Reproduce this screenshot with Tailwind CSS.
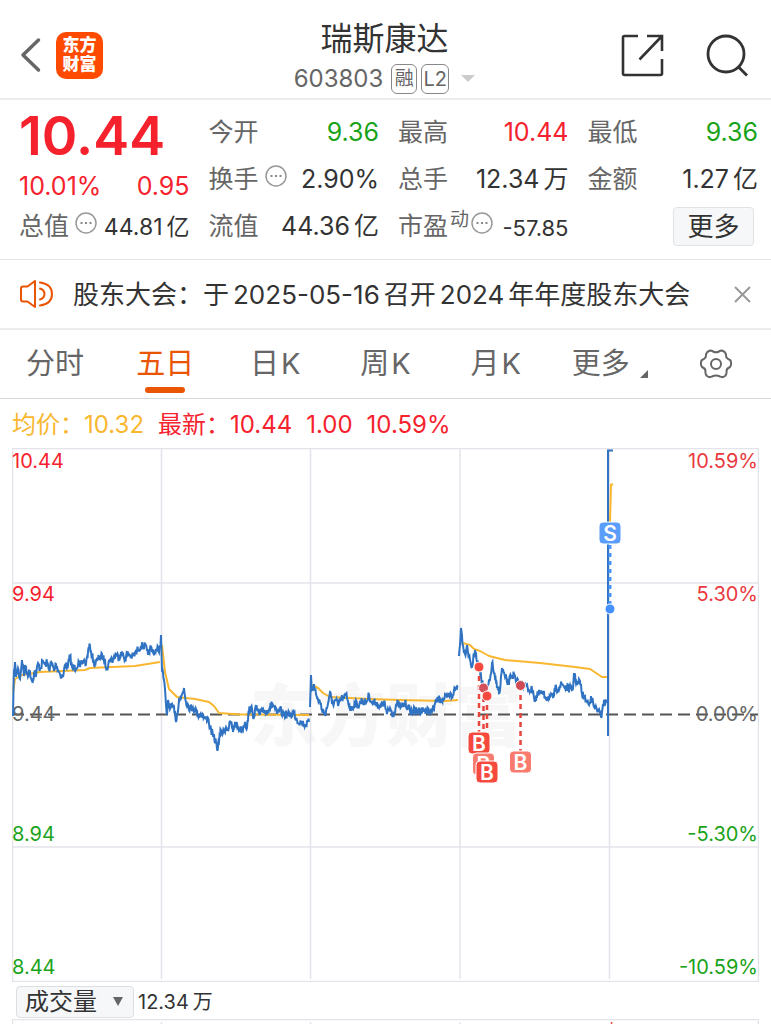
<!DOCTYPE html>
<html lang="zh-CN">
<head>
  <meta charset="UTF-8">
  <meta name="viewport" content="width=device-width, initial-scale=1.0">
  <title>瑞斯康达 603803</title>
  <script src="https://cdn.jsdelivr.net/npm/@tailwindcss/browser@4"></script>
</head>
<body class="bg-white font-['Inter','Noto_Sans_CJK_SC',sans-serif] text-[#333] overflow-x-hidden">
  <!-- Header -->
  <header class="grid grid-cols-[1fr_auto_1fr] items-center h-[100px] border-b-2 border-[#ececec] pl-5 pr-[22px]">
    <div class="flex items-center gap-3 pt-3">
      <button aria-label="返回">
        <svg class="w-6 h-9" viewBox="0 0 24 36" fill="none" stroke="#666" stroke-width="3.500" stroke-linecap="round" stroke-linejoin="round"><path d="M18.500 3 3 18 18.500 33"/></svg>
      </button>
      <a href="#" class="flex flex-col items-center justify-center size-[47px] rounded-[10px] bg-[#ff4a00] text-white text-[17px] leading-[19px] font-black">
        <span>东方</span><span>财富</span>
      </a>
    </div>
    <div class="text-center pt-4">
      <h1 class="text-[32px] leading-[44px]">瑞斯康达</h1>
      <button class="flex items-center gap-1 h-9 mx-auto text-[#666] text-[24px]">
        <span class="mr-1">603803</span>
        <span class="flex items-center justify-center w-[26px] h-[30px] border border-[#888] rounded-md text-[19px]">融</span>
        <span class="flex items-center justify-center w-7 h-[30px] border border-[#888] rounded-md text-[20px]">L2</span>
        <svg class="w-3.5 h-2 ml-2" viewBox="0 0 14 8"><path d="M0 0h14L7 7z" fill="#ccc"/></svg>
      </button>
    </div>
    <div class="flex items-center justify-end gap-[42px] pt-3">
      <button aria-label="分享">
        <svg class="w-[43px] h-[43px]" viewBox="0 0 43 43" fill="none" stroke="#333" stroke-width="2.600"><path d="M17 2H3.500Q2 2 2 3.500v36Q2 41 3.500 41h36q1.500 0 1.500-1.500V25M26 2h15v15M41 2 18.500 25.500"/></svg>
      </button>
      <button aria-label="搜索">
        <svg class="w-[43px] h-[43px]" viewBox="0 0 43 43" fill="none" stroke="#333" stroke-width="2.800"><circle cx="20" cy="20" r="18"/><path d="m32.500 33 8.500 8.500"/></svg>
      </button>
    </div>
  </header>

  <!-- Quote -->
  <section class="grid grid-cols-4 gap-x-[19px] pt-[9px] pb-[9px] pl-[19px] pr-[13px] border-b border-[#e4e4e4] text-[25px] whitespace-nowrap">
    <div class="text-[#f5222d]">
      <div class="h-[54px] text-[54px] leading-[54px] font-semibold">10.44</div>
      <div class="flex items-center justify-between h-12 text-[25px]"><span>10.01%</span><span>0.95</span></div>
      <div class="flex items-center justify-between h-8 text-[#333]">
        <span class="text-[25px] text-[#666]">总值</span>
        <svg class="w-[22px] h-[22px] mb-2" viewBox="0 0 22 22"><circle cx="11" cy="11" r="10" fill="none" stroke="#999" stroke-width="1.500"/><path d="M5.500 11h2m2.500 0h2m2.500 0h2" stroke="#888" stroke-width="2"/></svg>
        <span class="flex gap-1 text-[23px]"><span>44.81</span><span>亿</span></span>
      </div>
    </div>
    <div>
      <div class="flex items-center justify-between h-[47px]"><span class="text-[#666]">今开</span><span class="text-[#1aa31a]">9.36</span></div>
      <div class="flex items-center justify-between h-[47px]">
        <span class="flex items-center gap-1.5 text-[#666]">换手
          <svg class="w-[22px] h-[22px] mb-2" viewBox="0 0 22 22"><circle cx="11" cy="11" r="10" fill="none" stroke="#999" stroke-width="1.500"/><path d="M5.500 11h2m2.500 0h2m2.500 0h2" stroke="#888" stroke-width="2"/></svg>
        </span>
        <span>2.90%</span>
      </div>
      <div class="flex items-center justify-between h-[47px]"><span class="text-[#666]">流值</span><span class="flex gap-1"><span>44.36</span><span>亿</span></span></div>
    </div>
    <div>
      <div class="flex items-center justify-between h-[47px]"><span class="text-[#666]">最高</span><span class="text-[#f5222d]">10.44</span></div>
      <div class="flex items-center justify-between h-[47px]"><span class="text-[#666]">总手</span><span class="flex gap-1"><span>12.34</span><span>万</span></span></div>
      <div class="flex items-center justify-between h-[47px]">
        <span class="flex items-center text-[#666]">市盈<span class="ml-0.5 mb-3 text-[19px]">动</span>
          <svg class="w-[22px] h-[22px] mb-2 ml-0.5" viewBox="0 0 22 22"><circle cx="11" cy="11" r="10" fill="none" stroke="#999" stroke-width="1.500"/><path d="M5.500 11h2m2.500 0h2m2.500 0h2" stroke="#888" stroke-width="2"/></svg>
        </span>
        <span class="text-[22px] pt-1">-57.85</span>
      </div>
    </div>
    <div>
      <div class="flex items-center justify-between h-[47px]"><span class="text-[#666]">最低</span><span class="text-[#1aa31a]">9.36</span></div>
      <div class="flex items-center justify-between h-[47px]"><span class="text-[#666]">金额</span><span class="flex gap-1"><span>1.27</span><span>亿</span></span></div>
      <div class="flex items-center justify-end h-[47px] pr-1"><button class="w-[81px] h-[39px] rounded border border-[#e0e2e6] bg-[#f6f7f9] text-[26px] leading-none">更多</button></div>
    </div>
  </section>

  <!-- Notice -->
  <section class="flex items-center h-[70px] pl-5 pr-5 border-b-2 border-[#ececec]">
    <svg class="w-[34px] h-7 shrink-0" viewBox="0 0 34 28" fill="none" stroke="#ea5504" stroke-width="2" stroke-linejoin="round" stroke-linecap="round"><path d="M15 1v26L7.500 21.500H3Q1 21.500 1 19.500v-11Q1 6.500 3 6.500h4.500zM20 8.500q4.500 1.500 4.500 5.500T20 19.500M20 2.500q12 1.500 12 11.500T20 25.500"/></svg>
    <a href="#" class="flex-1 ml-[19px] text-[26px] whitespace-nowrap">股东大会：于<span class="mx-1">2025-05-16</span>召开<span class="mx-1">2024</span>年年度股东大会</a>
    <button aria-label="关闭"><svg class="size-[17px]" viewBox="0 0 17 17" stroke="#999" stroke-width="2"><path d="m1 1 15 15M16 1 1 16"/></svg></button>
  </section>

  <!-- Period tabs -->
  <nav class="grid grid-cols-7 h-[69px] border-b border-[#d8d8d8] text-[29px] text-[#666]">
    <button>分时</button>
    <button class="relative text-[#ea5504]">五日<span class="absolute bottom-[5px] left-1/2 -translate-x-1/2 w-10 h-1.5 rounded-full bg-[#ea5504]"></span></button>
    <button>日<span class="ml-0.5">K</span></button>
    <button>周<span class="ml-0.5">K</span></button>
    <button>月<span class="ml-0.5">K</span></button>
    <button class="flex items-center justify-center gap-2.5 pl-2">更多<svg class="w-2 h-2 mt-5" viewBox="0 0 8 8"><path d="M8 0v8H0z" fill="#666"/></svg></button>
    <button class="flex items-center justify-center" aria-label="设置">
      <svg class="w-8 h-[30px]" viewBox="0 0 32 30" fill="none" stroke="#666" stroke-width="2" stroke-linejoin="round"><circle cx="16" cy="15" r="5"/><path d="M10 1.500Q12 1.500 13 2.500Q16 4 19 2.500Q20 1.500 22 1.500Q25 2.500 26 5Q25.500 8.500 28 10Q30.500 10.500 31 13Q31.500 16 30 18Q26.500 19.500 26.500 22Q27 25 25 27Q22.500 29 20 27.500Q16 25.500 12 27.500Q9.500 29 7 27Q5 25 5.500 22Q5.500 19.500 2 18Q.5 16 1 13Q1.500 10.500 4 10Q6.500 8.500 6 5Q7 2.500 10 1.500z"/></svg>
    </button>
  </nav>

  <!-- Chart legend -->
  <div class="flex items-center h-[49px] pt-0.5 px-3 text-[24px] text-[#f5222d] whitespace-nowrap">
    <span class="mr-3.5 text-[#f9b72f]">均价：10.32</span>
    <span class="mr-3.5">最新：10.44</span>
    <span class="mr-3.5">1.00</span>
    <span>10.59%</span>
  </div>

  <!-- Five day chart -->
  <main class="mx-3">
    <svg class="block w-full h-auto" viewBox="12 448 747 534" fill="none" font-size="20">
      <text x="250" y="741" font-size="68" font-weight="900" fill="#f7f7f7">东方财富</text>
      <g stroke="#e3e4ea" stroke-width="1.500">
        <path d="M12.500 448.500h746v533h-746zM12 583h746M12 847h746M161.500 448v531M310.500 448v531M460 448v531M609.500 448v531"/>
      </g>
      <path d="M12 714.500h746" stroke="#555" stroke-width="2" stroke-dasharray="12 6"/>
      <g fill="#f5222d"><text x="12" y="468">10.44</text><text x="12" y="601">9.94</text></g>
      <text x="12" y="721" fill="#666">9.44</text>
      <g fill="#1aa31a"><text x="12" y="841">8.94</text><text x="12" y="974">8.44</text></g>
      <g text-anchor="end">
        <g fill="#e93a3f"><text x="758" y="468">10.59%</text><text x="758" y="601">5.30%</text></g>
        <text x="758" y="721" fill="#666">0.00%</text>
        <g fill="#1aa31a"><text x="758" y="841">-5.30%</text><text x="758" y="974">-10.59%</text></g>
      </g>
      <g stroke="#f9b72f" stroke-width="2" stroke-linejoin="round">
        <path d="M13 692 15 679 22 675 40 672 85 670 90 668 135 666 160 662"/>
        <path d="M162 645 165 672 169 689 177 697 195 699 209 702 214 706 219 713 240 714.500 309 715"/>
        <path d="M312 685 318 688 323 693 330 697 370 699 400 700 445 701 458 700"/>
        <path d="M463 643 470 645 474 649 480 651 489 656 505 660 540 663 575 667 590 669 602 677 607 677"/>
        <path d="M610 522 611 485 613 484"/>
      </g>
      <g id="price" stroke="#2f73c2" stroke-width="2"></g>
      <g stroke="#e8453c" stroke-width="2.500" stroke-dasharray="5 4">
        <path d="M479 667v66M483.500 688v44M487 696v36M520.500 686v66"/>
      </g>
      <g fill="#f4493c" stroke="#fff">
        <circle cx="479" cy="667" r="5"/><circle cx="483.500" cy="688" r="5" fill="#d4505a"/><circle cx="487" cy="696" r="5"/><circle cx="520.500" cy="685.500" r="5" fill="#cf4a52"/>
      </g>
      <path d="M610 545v60" stroke="#4b96ff" stroke-width="3" stroke-dasharray="4 4"/>
      <circle cx="610" cy="609" r="5" fill="#4590ff" stroke="#fff"/>
      <g font-size="21" font-weight="600" text-anchor="middle" fill="#fff">
        <rect x="468" y="732" width="22" height="22" rx="4" fill="#f4493c" stroke="#fff"/><text x="479" y="751">B</text>
        <rect x="472.500" y="753" width="22" height="22" rx="4" fill="#f97b70" stroke="#fff"/><text x="483.500" y="772">B</text>
        <rect x="476" y="761" width="22" height="22" rx="4" fill="#f4493c" stroke="#fff"/><text x="487" y="780">B</text>
        <rect x="509.500" y="751" width="22" height="22" rx="4" fill="#f97b70" stroke="#fff"/><text x="520.500" y="770">B</text>
        <rect x="599" y="522" width="22" height="22" rx="4" fill="#5a9dfb" stroke="#fff"/><text x="610" y="541">S</text>
      </g>
    </svg>

    <!-- Volume -->
    <div class="flex items-center gap-1 h-[37px] pl-1 pt-0.5 text-[20px]">
      <div class="relative">
        <select aria-label="指标" class="block appearance-none w-[118px] h-8 pl-2 rounded border border-[#dddfe3] bg-[#f6f7f9] text-[24px] leading-none">
          <option>成交量</option>
        </select>
        <svg class="absolute right-[11px] top-[11px] w-2.5 h-[9px] pointer-events-none" viewBox="0 0 10 9"><path d="M0 0h10L5 9z" fill="#666"/></svg>
      </div>
      <span class="flex gap-1"><span>12.34</span><span>万</span></span>
    </div>
    <svg class="block w-full h-auto" viewBox="12 1019 747 5" stroke="#e3e4ea" stroke-width="1.500"><path fill="none" d="M12.500 1024v-4.500h746v4.500M161.500 1022v2M310.500 1022v2M460 1022v2"/><path d="M611.500 1022v2" stroke="#f4493c"/></svg>
  </main>

  <script>
    // price anchors for each trading day: x,y pairs
    var days = [
      "13,716 14,670 15,662 16,677 18,668 20,679 22,660 24,676 25,665 27,674 30,672 32,681 35,671 36,676 38,663 40,669 43,661 45,665 47,662 49,669 52,663 54,671 56,664 60,674 63,677 65,665 68,666 70,656 72,667 75,668 79,662 80,667 84,660 86,664 88,652 90,646 92,655 94,664 97,661 100,656 103,657 107,668 110,659 113,660 116,654 119,658 121,652 125,659 128,653 132,657 136,653 138,649 141,646 145,646 147,651 148,655 150,648 153,652 157,650 160,648 161,635 162,670 164,680 166,705 167,715 168,700 170,709 173,707 175,711 176,722 179,700 181,698 184,688 186,702 190,708 193,708 195,709 198,715 202,714 205,719 208,718 210,727 213,736 216,742 217,749 219,742 221,730 223,733 226,727 228,729 231,722 233,732 235,722 238,728 240,729 242,730 245,722 247,728 249,710 251,707 253,717 256,708 260,715 263,709 265,712 268,710 271,705 274,706 277,714 280,710 283,714 290,715 294,713 297,720 302,723 306,725 309,722",
      "310,707 311,675 312,690 314,684 315,690 317,698 320,702 322,710 325,714 327,708 329,698 330,692 332,704 336,700 338,706 341,698 344,699 346,694 348,701 351,710 355,703 358,706 362,700 366,703 369,695 372,703 376,702 380,708 384,702 387,714 390,708 393,715 397,703 401,707 405,703 408,707 410,711 425,710 432,712 435,704 438,699 441,700 444,699 448,697 450,694 452,697 454,690 456,689 458,686",
      "459,656 461,628 463,645 465,654 467,645 469,657 472,667 475,650 477,662 479,667 481,675 483,687 487,690 490,680 492,663 495,678 497,688 500,690 502,668 505,677 508,684 511,676 514,675 516,682 520,683 525,685 530,690 533,690 535,701 538,694 542,693 545,697 550,697 553,698 555,690 559,687 562,684 566,688 573,689 574,673 577,685 580,681 582,694 586,700 589,705 591,696 594,707 598,710 601,717 603,704 606,702 607,701"
    ];
    var seed = 7;
    function rnd() {
      seed = (seed * 16807) % 2147483647;
      return seed / 2147483647 - 0.5;
    }
    // fill in the ticks between the anchors, two per unit
    function tickPath(day) {
      var pts = day.split(" ").map(p => p.split(",").map(Number));
      var d = "M" + pts[0];
      for (var i = 1; i < pts.length; i++) {
        var a = pts[i - 1], b = pts[i];
        for (var x = a[0] + 0.5; x < b[0]; x += 0.5) {
          var y = a[1] + (b[1] - a[1]) * (x - a[0]) / (b[0] - a[0]);
          d += "L" + x + " " + (y + rnd() * 8).toFixed(1);
        }
        d += "L" + b;
      }
      return d;
    }
    var paths = days.map(tickPath).concat("M608 736V450.500H613");
    document.getElementById("price").innerHTML = paths.map(d => '<path d="' + d + '"/>').join("");
  </script>
</body>
</html>
